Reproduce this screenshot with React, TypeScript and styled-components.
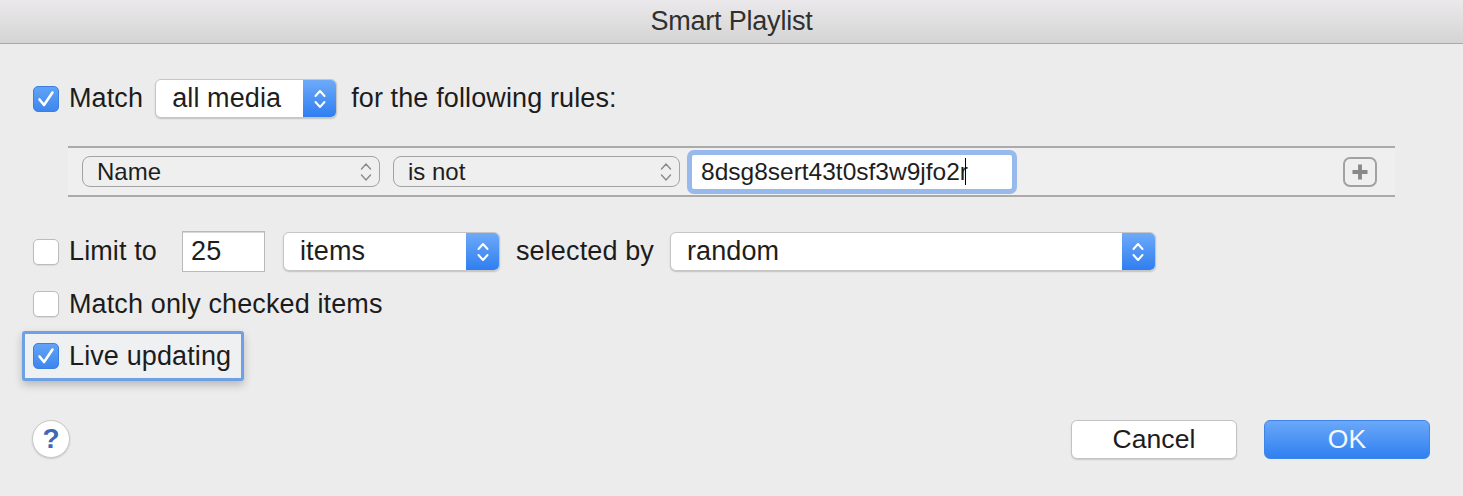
import React from "react";
import styled, { createGlobalStyle, css } from "styled-components";

const Global = createGlobalStyle`
  html, body { margin: 0; padding: 0; background: #ececec; }
  body { font-family: "Liberation Sans", Arial, sans-serif; color: #1e1e1e; }
`;

const Window = styled.div`
  width: 1463px;
  height: 496px;
  background: #ececec;
  display: flex;
  flex-direction: column;
  overflow: hidden;
`;

const TitleBar = styled.div`
  height: 43px;
  border-bottom: 1px solid #a9a9a9;
  background: linear-gradient(#ebe9eb, #d5d4d5);
  display: flex;
  align-items: center;
  justify-content: center;
  font-size: 27px;
  color: #303030;
  letter-spacing: -0.2px;
`;

const Content = styled.div`
  display: flex;
  flex-direction: column;
  padding: 0 33px 0 33px;
  font-size: 27px;
  letter-spacing: 0.12px;
`;

const Row = styled.div<{ $top: number; $h: number }>`
  display: flex;
  align-items: center;
  height: ${(p) => p.$h}px;
  margin-top: ${(p) => p.$top}px;
`;

const Box = styled.span<{ $checked?: boolean }>`
  width: 26px;
  height: 26px;
  box-sizing: border-box;
  border-radius: 5px;
  flex: none;
  display: flex;
  align-items: center;
  justify-content: center;
  ${(p) =>
    p.$checked
      ? css`
          background: linear-gradient(#62a3f7, #3d86ee);
          border: 1px solid #3b7fe0;
        `
      : css`
          background: #fff;
          border: 1px solid #bcbcbc;
          box-shadow: 0 1px 1px rgba(0, 0, 0, 0.08);
        `}
`;

const Label = styled.span<{ $ml?: number }>`
  margin-left: ${(p) => p.$ml ?? 0}px;
  white-space: nowrap;
  color: #1c1c1c;
`;

const Check = ({ checked }: { checked?: boolean }) => (
  <Box $checked={checked}>
    {checked && (
      <svg width="22" height="22" viewBox="0 0 22 22">
        <path d="M4.5 11.5 L9 17 L17.5 4.5" fill="none" stroke="#fff" strokeWidth="2.6" strokeLinecap="round" strokeLinejoin="round" />
      </svg>
    )}
  </Box>
);

const PopUp = styled.div<{ $w: number; $h: number; $ml?: number }>`
  width: ${(p) => p.$w}px;
  height: ${(p) => p.$h}px;
  margin-left: ${(p) => p.$ml ?? 0}px;
  box-sizing: border-box;
  background: #fff;
  border: 1px solid #c6c6c6;
  border-radius: 6px;
  box-shadow: 0 1px 1.5px rgba(0, 0, 0, 0.18);
  display: flex;
  align-items: center;
  overflow: hidden;
  flex: none;
`;

const PopText = styled.span`
  flex: 1;
  padding-left: 16px;
  white-space: nowrap;
`;

const Stepper = styled.span`
  width: 33px;
  align-self: stretch;
  background: linear-gradient(#6eaaf9, #2f7ef0);
  display: flex;
  align-items: center;
  justify-content: center;
`;

const Chevrons = ({ color, w = 1.8 }: { color: string; w?: number }) => (
  <svg width="14" height="26" viewBox="0 0 14 26">
    <path d="M2.5 10 L7 5 L11.5 10" fill="none" stroke={color} strokeWidth={w} strokeLinecap="round" strokeLinejoin="round" />
    <path d="M2.5 16 L7 21 L11.5 16" fill="none" stroke={color} strokeWidth={w} strokeLinecap="round" strokeLinejoin="round" />
  </svg>
);

const BluePop = ({ w, h, ml, text }: { w: number; h: number; ml?: number; text: string }) => (
  <PopUp $w={w} $h={h} $ml={ml}>
    <PopText>{text}</PopText>
    <Stepper>
      <Chevrons color="#fff" w={2} />
    </Stepper>
  </PopUp>
);

const RuleBox = styled.div`
  margin-top: 28px;
  margin-left: 35px;
  width: 1327px;
  height: 51px;
  box-sizing: border-box;
  border-top: 2px solid #aaaaaa;
  border-bottom: 2px solid #aaaaaa;
  background: #efefef;
  display: flex;
  align-items: center;
  padding-left: 14px;
  font-size: 24px;
  letter-spacing: 0;
`;

const RuleSelect = styled.div<{ $w: number; $ml?: number }>`
  width: ${(p) => p.$w}px;
  height: 31px;
  margin-left: ${(p) => p.$ml ?? 0}px;
  box-sizing: border-box;
  border: 1.5px solid #a3a3a3;
  border-radius: 8px;
  display: flex;
  align-items: center;
  padding: 0 6px 0 14px;
  flex: none;
  & > span { flex: 1; }
`;

const FocusField = styled.div`
  margin-left: 7px;
  width: 330px;
  height: 44px;
  box-sizing: border-box;
  border: 5px solid #98b9ec;
  border-radius: 7px;
  background: #fff;
  display: flex;
  align-items: center;
  padding-left: 9px;
  font-size: 24.5px;
  flex: none;
`;

const Caret = styled.span`
  display: inline-block;
  width: 1.5px;
  height: 27px;
  background: #000;
  vertical-align: middle;
  margin-left: -3px;
`;

const PlusBtn = styled.div`
  margin-left: auto;
  margin-right: 18px;
  width: 34px;
  height: 30px;
  box-sizing: border-box;
  border: 2px solid #a2a2a2;
  border-radius: 7px;
  display: flex;
  align-items: center;
  justify-content: center;
`;

const NumField = styled.div`
  margin-left: 25px;
  width: 83px;
  height: 41px;
  box-sizing: border-box;
  background: #fff;
  border: 1px solid #b9b9b9;
  box-shadow: inset 0 1px 0 #d8d8d8;
  display: flex;
  align-items: center;
  padding-left: 8px;
  flex: none;
`;

const FocusRing = styled.div`
  margin-left: -11px;
  margin-top: 14px;
  height: 50px;
  width: 222px;
  box-sizing: border-box;
  border: 3px solid #6da0e4;
  border-radius: 3px;
  background: #eff0f2;
  box-shadow: 0 4px 8px rgba(0, 0, 0, 0.22);
  display: flex;
  align-items: center;
  padding-left: 8px;
`;

const Footer = styled.div`
  margin-top: 38px;
  display: flex;
  align-items: center;
  height: 40px;
`;

const Help = styled.div`
  margin-left: -1px;
  width: 38px;
  height: 38px;
  box-sizing: border-box;
  border-radius: 50%;
  background: #fff;
  border: 1px solid #c9c9c9;
  box-shadow: 0 1px 2px rgba(0, 0, 0, 0.15);
  display: flex;
  align-items: center;
  justify-content: center;
  color: #3c68b8;
  font-size: 28px;
  font-weight: bold;
  letter-spacing: 0;
`;

const Button = styled.div<{ $primary?: boolean; $ml?: number }>`
  width: 166px;
  height: 39px;
  box-sizing: border-box;
  border-radius: 6px;
  margin-left: ${(p) => p.$ml ?? 0}px;
  display: flex;
  align-items: center;
  justify-content: center;
  font-size: 26.5px;
  ${(p) =>
    p.$primary
      ? css`
          background: linear-gradient(#6aa8f9, #3080f0);
          border: 1px solid #3f85e8;
          color: #f4f8ff;
        `
      : css`
          background: #fff;
          border: 1px solid #c3c3c3;
          box-shadow: 0 1px 1.5px rgba(0, 0, 0, 0.15);
          color: #1c1c1c;
        `}
`;

const ButtonSpacer = styled.div`
  flex: 1;
`;

export default function App() {
  return (
    <>
      <Global />
      <Window>
        <TitleBar>Smart Playlist</TitleBar>
        <Content>
          <Row $top={35} $h={39}>
            <Check checked />
            <Label $ml={10}>Match</Label>
            <BluePop w={182} h={39} ml={12} text="all media" />
            <Label $ml={14}>for the following rules:</Label>
          </Row>
          <RuleBox>
            <RuleSelect $w={298}>
              <span>Name</span>
              <Chevrons color="#8a8a8a" w={1.4} />
            </RuleSelect>
            <RuleSelect $w={287} $ml={13}>
              <span>is not</span>
              <Chevrons color="#8a8a8a" w={1.4} />
            </RuleSelect>
            <FocusField>
              <span>8dsg8sert43t0sf3w9jfo2r</span>
              <Caret />
            </FocusField>
            <PlusBtn>
              <svg width="20" height="20" viewBox="0 0 20 20">
                <path d="M10 2.5 V17.5 M2.5 10 H17.5" stroke="#888" strokeWidth="3.8" />
              </svg>
            </PlusBtn>
          </RuleBox>
          <Row $top={34} $h={41}>
            <Check />
            <Label $ml={10}>Limit to</Label>
            <NumField>25</NumField>
            <BluePop w={217} h={39} ml={18} text="items" />
            <Label $ml={16}>selected by</Label>
            <BluePop w={486} h={39} ml={16} text="random" />
          </Row>
          <Row $top={19} $h={26}>
            <Check />
            <Label $ml={10}>Match only checked items</Label>
          </Row>
          <FocusRing>
            <Check checked />
            <Label $ml={10}>Live updating</Label>
          </FocusRing>
          <Footer>
            <Help>?</Help>
            <ButtonSpacer />
            <Button>Cancel</Button>
            <Button $primary $ml={27}>OK</Button>
          </Footer>
        </Content>
      </Window>
    </>
  );
}
